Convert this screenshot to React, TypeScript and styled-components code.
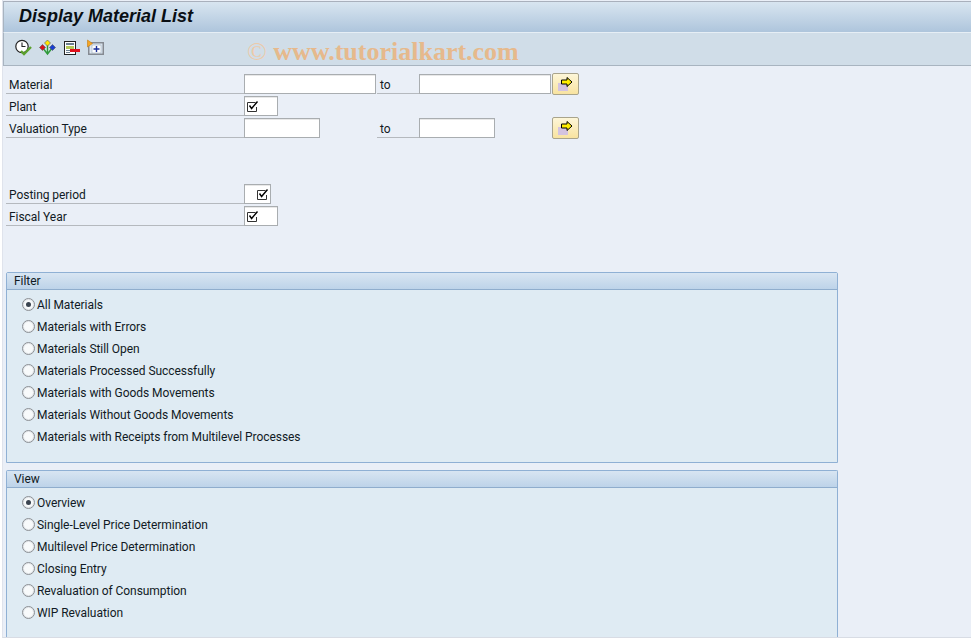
import styled, { createGlobalStyle } from "styled-components";

const GlobalStyle = createGlobalStyle`
  html, body {
    margin: 0;
    padding: 0;
    background: #ffffff;
  }
`;

const filterOptions = [
  "All Materials",
  "Materials with Errors",
  "Materials Still Open",
  "Materials Processed Successfully",
  "Materials with Goods Movements",
  "Materials Without Goods Movements",
  "Materials with Receipts from Multilevel Processes",
];

const viewOptions = [
  "Overview",
  "Single-Level Price Determination",
  "Multilevel Price Determination",
  "Closing Entry",
  "Revaluation of Consumption",
  "WIP Revaluation",
];

function CheckMark() {
  return (
    <svg width="12" height="11" viewBox="0 0 12 11">
      <path d="M8.5 1.5H0.5V10.5H9.5V6" fill="none" stroke="#333" strokeWidth="1" />
      <path d="M2.5 4.5L4.6 7.5L10.5 0.5" fill="none" stroke="#000" strokeWidth="1.4" />
    </svg>
  );
}

function ArrowIcon() {
  return (
    <svg width="15" height="14" viewBox="0 0 15 14">
      <rect x="0" y="6" width="10" height="8" fill="#d3c3e0" />
      <path d="M3.5 3H9V0.5L14 5L9 9.5V7H3.5Z" fill="#ffee00" stroke="#000" strokeWidth="1" />
    </svg>
  );
}

function ExecuteIcon() {
  return (
    <svg width="17" height="17" viewBox="0 0 17 17">
      <circle cx="7" cy="7.5" r="6.2" fill="#fff" stroke="#222" strokeWidth="1.2" />
      <path d="M7 3.5V7.5H10.5" fill="none" stroke="#222" strokeWidth="1.1" />
      <path d="M6 12L9 15L16 8" fill="none" stroke="#5aa02c" strokeWidth="2.4" />
    </svg>
  );
}

function VariantIcon() {
  return (
    <svg width="17" height="17" viewBox="0 0 17 17">
      <path d="M3.5 8.5L8.5 15L13.5 8.5M8.5 6V15" fill="none" stroke="#2f9a3a" strokeWidth="1.4" />
      <path d="M8.5 1L11.5 4L8.5 7L5.5 4Z" fill="#ffe800" stroke="#555" strokeWidth="0.6" />
      <path d="M3.5 5.5L6.5 8.5L3.5 11.5L0.5 8.5Z" fill="#d8141c" stroke="#555" strokeWidth="0.6" />
      <path d="M13.5 5.5L16.5 8.5L13.5 11.5L10.5 8.5Z" fill="#1a3fd0" stroke="#555" strokeWidth="0.6" />
    </svg>
  );
}

function DeleteListIcon() {
  return (
    <svg width="17" height="17" viewBox="0 0 17 17">
      <rect x="1.5" y="2.5" width="11" height="13" fill="#fff" stroke="#222" />
      <rect x="3" y="4" width="8" height="2" fill="#6b7f8f" />
      <rect x="3" y="7" width="8" height="3" fill="#b4c85a" />
      <rect x="3" y="11" width="4" height="1" fill="#6b7f8f" />
      <rect x="3" y="13" width="4" height="1" fill="#6b7f8f" />
      <rect x="7" y="10" width="10" height="3" fill="#e0101c" />
    </svg>
  );
}

function ExpandIcon() {
  return (
    <svg width="17" height="17" viewBox="0 0 17 17">
      <rect x="1.75" y="3.75" width="14.5" height="11.5" fill="#dfe8f2" stroke="#858a92" strokeWidth="1.5" />
      <rect x="5" y="6" width="9" height="8" fill="#fff" stroke="#9ab" strokeWidth="0.6" />
      <path d="M9.5 7V13M6.5 10H12.5" stroke="#1a2f9a" strokeWidth="1.4" />
      <path d="M0.5 1L5.5 4.5L0.5 8Z" fill="#f5a623" stroke="#c47a10" strokeWidth="0.6" />
    </svg>
  );
}

function App() {
  return (
    <>
      <GlobalStyle />
      <Page>
        <TitleBar>
          <Title>Display Material List</Title>
        </TitleBar>
        <Toolbar>
          <ToolIcon><ExecuteIcon /></ToolIcon>
          <ToolIcon><VariantIcon /></ToolIcon>
          <ToolIcon><DeleteListIcon /></ToolIcon>
          <ToolIcon><ExpandIcon /></ToolIcon>
          <Watermark><CopyrightSign>©</CopyrightSign> www.tutorialkart.com</Watermark>
        </Toolbar>
        <Content>
          <Row>
            <Label>Material</Label>
            <Field $width={132} />
            <ToLabel>to</ToLabel>
            <Field $width={132} />
            <MoreButton><ArrowIcon /></MoreButton>
          </Row>
          <Row>
            <Label>Plant</Label>
            <Field $width={34}><CheckMark /></Field>
          </Row>
          <Row>
            <Label>Valuation Type</Label>
            <Field $width={76} />
            <Spacer $width={56} />
            <ToLabel>to</ToLabel>
            <Field $width={76} />
            <Spacer $width={56} />
            <MoreButton><ArrowIcon /></MoreButton>
          </Row>
          <Row />
          <Row />
          <Row>
            <Label>Posting period</Label>
            <Field $width={27} $right><CheckMark /></Field>
          </Row>
          <Row>
            <Label>Fiscal Year</Label>
            <Field $width={34}><CheckMark /></Field>
          </Row>
          <FilterGroup>
            <GroupHeader>Filter</GroupHeader>
            <GroupBody>
              {filterOptions.map((option, index) => (
                <RadioRow key={option}>
                  <Radio $checked={index === 0} />
                  <RadioText>{option}</RadioText>
                </RadioRow>
              ))}
            </GroupBody>
          </FilterGroup>
          <ViewGroup>
            <GroupHeader>View</GroupHeader>
            <GroupBody>
              {viewOptions.map((option, index) => (
                <RadioRow key={option}>
                  <Radio $checked={index === 0} />
                  <RadioText>{option}</RadioText>
                </RadioRow>
              ))}
            </GroupBody>
          </ViewGroup>
        </Content>
      </Page>
    </>
  );
}

const Page = styled.div`
  width: 969px;
  height: 638px;
  margin-left: 2px;
  display: flex;
  flex-direction: column;
  box-sizing: border-box;
  overflow: hidden;
  background: #eaeff7;
  border-left: 1px solid #dfe3ec;
  border-bottom: 1px solid #d8dce4;
  font-family: "Roboto", "Liberation Sans", sans-serif;
  font-size: 12px;
  letter-spacing: -0.05px;
  color: #111a24;
`;
const TitleBar = styled.div`
  height: 32px;
  box-sizing: border-box;
  display: flex;
  align-items: center;
  margin-top: 1px;
  padding: 0 0 2px 15px;
  border-top: 1px solid #a9b0bc;
  border-left: 1px solid #a8b4c0;
  border-bottom: 1px solid #e6eef5;
  background: linear-gradient(#d8e5f0, #aec5dc);
`;
const Title = styled.h1`
  margin: 0;
  font-family: "Liberation Sans", sans-serif;
  font-size: 18px;
  font-style: italic;
  font-weight: bold;
  letter-spacing: 0;
  color: #0a0f14;
`;
const Toolbar = styled.div`
  position: relative;
  height: 33px;
  box-sizing: border-box;
  display: flex;
  align-items: center;
  gap: 7px;
  padding: 0 0 3px 11px;
  border-left: 1px solid #a8b4c0;
  border-bottom: 1px solid #a8b4c0;
  background: #d0dde8;
`;
const ToolIcon = styled.span`
  display: flex;
  width: 17px;
  height: 17px;
`;
const Watermark = styled.span`
  position: absolute;
  left: 243px;
  top: 4px;
  font-family: "Liberation Serif", serif;
  font-size: 26px;
  font-weight: bold;
  letter-spacing: 0;
  color: #e6b98c;
  white-space: nowrap;
`;
const CopyrightSign = styled.span`
  font-weight: normal;
  color: #eccaa8;
`;
const Content = styled.div`
  flex: 1;
  display: flex;
  flex-direction: column;
  min-height: 0;
  padding: 7px 0 0 3px;
`;
const Row = styled.div`
  height: 22px;
  flex: none;
  display: flex;
  align-items: flex-start;
`;
const Label = styled.div`
  width: 238px;
  height: 21px;
  box-sizing: border-box;
  padding: 3px 0 0 3px;
  line-height: 18px;
  border-bottom: 1px solid #b5b9be;
`;
const ToLabel = styled.div`
  width: 42px;
  height: 21px;
  box-sizing: border-box;
  margin-left: 1px;
  padding: 3px 0 0 3px;
  line-height: 18px;
  border-bottom: 1px solid #b5b9be;
`;
const Field = styled.div<{ $width: number; $right?: boolean }>`
  width: ${(p) => p.$width}px;
  height: 20px;
  margin-top: 1px;
  box-sizing: border-box;
  display: flex;
  align-items: center;
  justify-content: ${(p) => (p.$right ? "flex-end" : "flex-start")};
  padding: 0 1px 0 2px;
  background: #ffffff;
  border: 1px solid #a9adb0;
  box-shadow: inset 0 1px 0 #e8e8e8;
  flex: none;
`;
const Spacer = styled.div<{ $width: number }>`
  width: ${(p) => p.$width}px;
  flex: none;
`;
const MoreButton = styled.div`
  width: 27px;
  height: 22px;
  box-sizing: border-box;
  margin-left: 1px;
  display: flex;
  align-items: center;
  justify-content: center;
  background: linear-gradient(#fdf6d8, #f8e3a0);
  border: 1px solid #a9a48c;
  border-radius: 2px;
`;
const Group = styled.section`
  width: 832px;
  box-sizing: border-box;
  display: flex;
  flex-direction: column;
  background: #dfebf3;
  border: 1px solid #8fb0d4;
  border-radius: 2px 2px 0 0;
`;
const FilterGroup = styled(Group)`
  height: 191px;
  margin-top: 45px;
  flex: none;
`;
const ViewGroup = styled(Group)`
  flex: 1;
  margin-top: 7px;
  border-bottom: none;
`;
const GroupHeader = styled.div`
  height: 17px;
  box-sizing: border-box;
  padding: 1px 0 0 7px;
  line-height: 15px;
  background: linear-gradient(#d8e5f2, #bdd3e9);
  border-bottom: 1px solid #8fadcd;
`;
const GroupBody = styled.div`
  padding: 3px 0 0 15px;
`;
const RadioRow = styled.div`
  height: 22px;
  display: flex;
  align-items: center;
  gap: 2px;
  line-height: 22px;
`;
const RadioText = styled.span`
  position: relative;
  top: 1px;
`;
const Radio = styled.span<{ $checked?: boolean }>`
  width: 13px;
  height: 13px;
  box-sizing: border-box;
  flex: none;
  display: flex;
  align-items: center;
  justify-content: center;
  border-radius: 50%;
  border: 1px solid #8b8f94;
  background: #f8fafb;
  box-shadow: inset 0 0 0 1px #e2e6ea;
  &::after {
    content: "";
    display: ${(p) => (p.$checked ? "block" : "none")};
    width: 5px;
    height: 5px;
    border-radius: 50%;
    background: #3a4450;
  }
`;

export default App;
